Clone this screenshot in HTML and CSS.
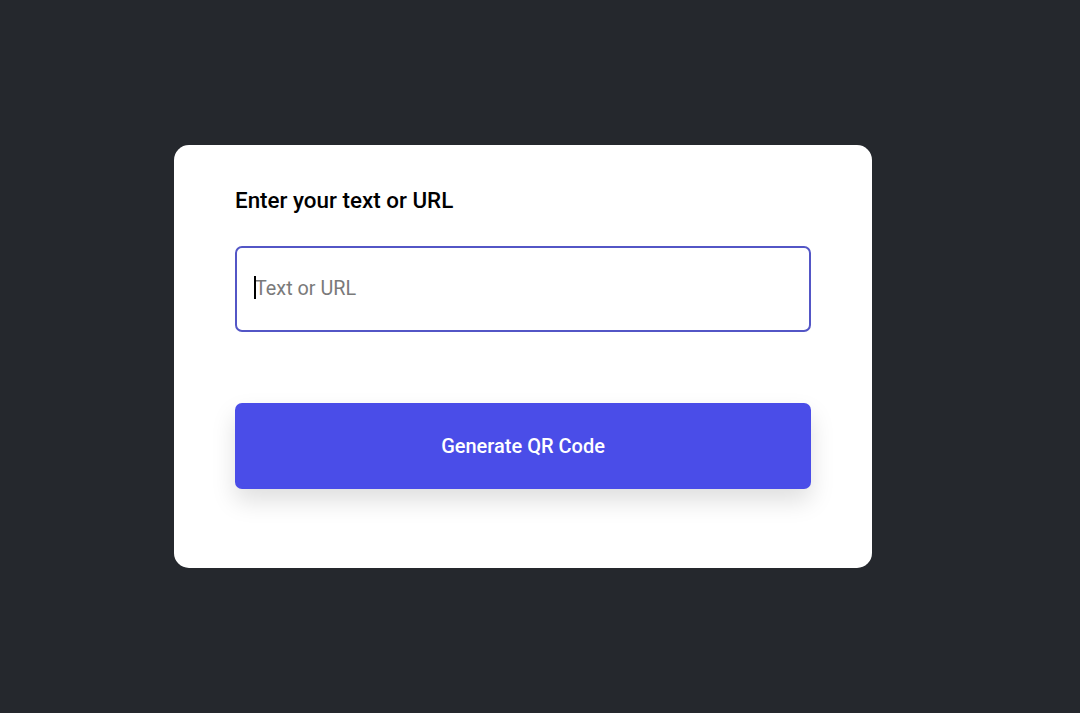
FILE: index.html
```html
<!DOCTYPE html>
<html lang="en">
<head>
<meta charset="utf-8">
<title>QR Code Generator</title>
<link rel="stylesheet" href="styles.css">
</head>
<body>
<main class="page">
  <section class="card">
    <label class="title" for="qr-input">Enter your text or URL</label>
    <div class="field">
      <span class="caret"></span>
      <input id="qr-input" class="input" type="text" placeholder="Text or URL">
    </div>
    <button class="btn" type="button">Generate QR Code</button>
  </section>
</main>
</body>
</html>
```
FILE: styles.css
```css
* { box-sizing: border-box; }
html, body { margin: 0; height: 100%; }
body {
  background: #25282d;
  font-family: Roboto, "Noto Sans", "Liberation Sans", sans-serif;
}
.page {
  width: 1046px;
  height: 713px;
  display: flex;
  align-items: center;
  justify-content: center;
}
.card {
  width: 698px;
  background: #ffffff;
  border-radius: 15px;
  padding: 42px 61px 79px;
  display: flex;
  flex-direction: column;
}
.title {
  font-size: 22.4px;
  font-weight: 500;
  color: #000;
  line-height: 27px;
  height: 27px;
  margin-bottom: 32px;
}
.field {
  position: relative;
  height: 86px;
  margin-bottom: 71px;
}
.input {
  width: 100%;
  height: 86px;
  border: 2px solid #5356c6;
  border-radius: 7px;
  padding: 0 18px 2px;
  font-family: inherit;
  font-size: 19.8px;
  color: #222;
  outline: none;
  background: #fff;
}
.input::placeholder { color: #7a7a7a; }
.caret {
  position: absolute;
  left: 19px;
  top: 30px;
  width: 2px;
  height: 23px;
  background: #000;
}
.btn {
  height: 86px;
  width: 100%;
  border: none;
  border-radius: 7px;
  background: #4a4de8;
  color: #fff;
  font-family: inherit;
  font-size: 20px;
  font-weight: 500;
  box-shadow: 0 12px 24px rgba(0, 0, 0, 0.13);
  cursor: pointer;
}
```
